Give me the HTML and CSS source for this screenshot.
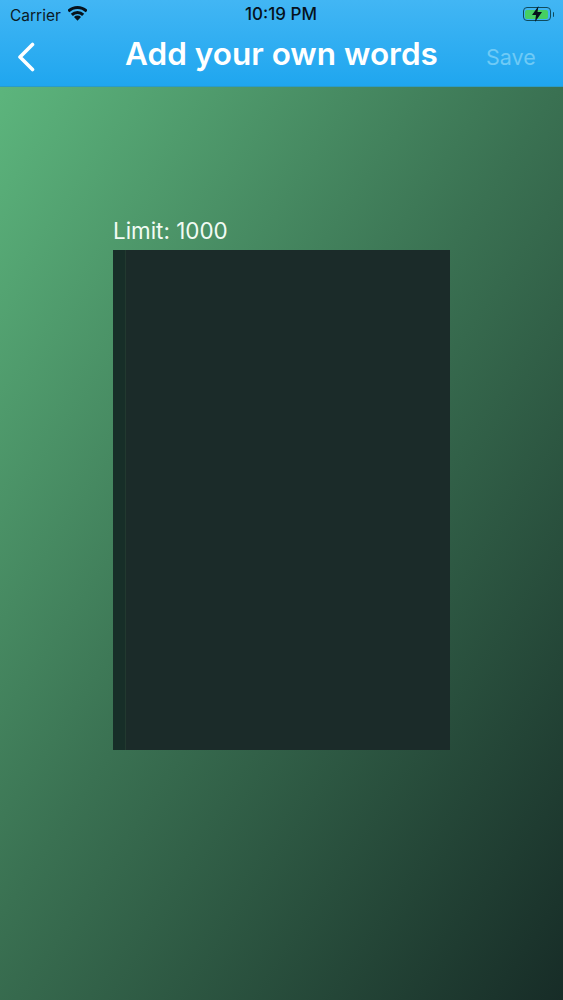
FILE: index.html
```html
<!DOCTYPE html>
<html lang="en">
<head>
<meta charset="utf-8">
<title>Add your own words</title>
<link rel="stylesheet" href="styles.css">
</head>
<body>
<div class="screen">
  <header class="header">
    <div class="status">
      <div class="status-left">
        <span class="carrier">Carrier</span>
        <svg class="wifi" viewBox="0 0 19 15" width="19" height="15"><path class="wifi-arc" d="M.31 5.31A13 13 0 0 1 18.690 5.310"/><path class="wifi-arc" d="M3.840 8.840A8 8 0 0 1 15.160 8.840"/><path d="M9.500 14.800 6 11A4.900 4.900 0 0 1 13 11z"/></svg>
      </div>
      <span class="time">10:19 PM</span>
      <div class="battery">
        <div class="battery-body"><div class="battery-fill"></div>
          <svg class="bolt" viewBox="0 0 10 16" width="10" height="16"><path d="M6.500 0 0 9h4l-1 7 7-10H5.500z"/></svg>
        </div>
        <div class="battery-cap"></div>
      </div>
    </div>
    <div class="nav">
      <svg class="back" viewBox="0 0 20 30" width="20" height="30"><path d="M16.500 2.500 4 15l12.500 12.500"/></svg>
      <h1 class="title">Add your own words</h1>
      <span class="save">Save</span>
    </div>
  </header>
  <main class="content">
    <div class="limit">Limit: 1000</div>
    <div class="box"><div class="box-edge"></div></div>
  </main>
</div>
</body>
</html>
```
FILE: styles.css
```css
* { box-sizing: border-box; }
html, body { margin: 0; padding: 0; }
body { width: 563px; height: 1000px; overflow: hidden; font-family: Inter, "Liberation Sans", sans-serif; }
.screen {
  width: 563px; height: 1000px; display: flex; flex-direction: column;
  background: linear-gradient(124deg, #60bc81 0%, #3a7152 50%, #172c27 100%);
}
.header {
  height: 87px; flex: none;
  background: linear-gradient(180deg, #42b6f4 0%, #1fa6ef 100%);
  border-bottom: 1px solid #2a9bc8;
}
.status {
  height: 29px; padding: 1px 11px 0 10px;
  display: grid; grid-template-columns: 1fr auto 1fr; align-items: center;
  color: #0a1a26;
}
.status-left { display: flex; align-items: center; gap: 7px; }
.carrier { font-size: 15.500px; }
.wifi { fill: #06121c; margin-top: -3px; }
.wifi-arc { fill: none; stroke: #06121c; stroke-width: 3; }
.time { font-size: 17px; font-weight: 500; color: #06121c; margin-top: -2px; }
.battery { justify-self: end; display: flex; align-items: center; gap: 2px; margin: -2px -2px 0 0; }
.battery-body {
  position: relative; width: 28px; height: 14px; border: 1px solid #0f4a5c; border-radius: 4px; padding: 1.500px;
}
.battery-fill { width: 100%; height: 100%; background: #45cf62; border-radius: 2px; }
.bolt { position: absolute; left: 8px; top: -2px; fill: #06121c; }
.battery-cap { width: 1.500px; height: 5px; background: #0f4a5c; border-radius: 0 1px 1px 0; }
.nav { height: 57px; position: relative; display: flex; align-items: center; justify-content: center; }
.back { position: absolute; left: 16px; top: 13px; fill: none; stroke: #fff; stroke-width: 3.600; stroke-linecap: round; stroke-linejoin: round; }
.title { margin: -7px 0 0; font-size: 31.500px; line-height: 36px; font-weight: 600; color: #fff; }
.save { position: absolute; left: 486px; top: 15px; font-size: 21.500px; line-height: 26px; color: #6fcaf6; }
.content { flex: 1; padding: 130px 113px 0; }
.limit { font-size: 22.400px; line-height: 27px; height: 33px; color: #f2fbf4; }
.box { width: 337px; height: 500px; background: #1b2b29; display: flex; }
.box-edge { width: 13px; background: #172e28; border-right: 1px solid #22392f; }
```
